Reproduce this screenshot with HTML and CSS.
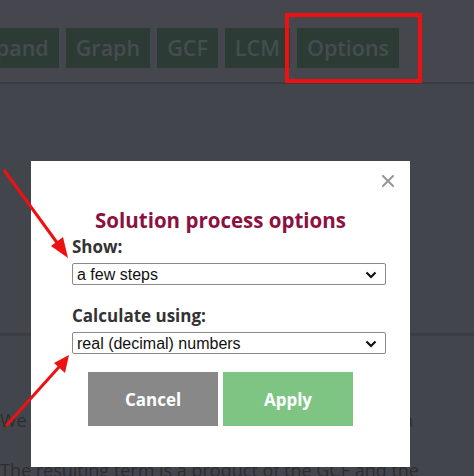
FILE: index.html
```html
<!DOCTYPE html>
<html lang="en">
<head>
<meta charset="utf-8">
<title>Solution process options</title>
<link rel="stylesheet" href="styles.css">
</head>
<body>
<header class="topbar">
  <nav class="tabs">
    <span class="tab">Expand</span>
    <span class="tab">Graph</span>
    <span class="tab">GCF</span>
    <span class="tab">LCM</span>
    <span class="tab">Options</span>
  </nav>
</header>
<main class="content">
  <section class="work"></section>
  <section class="explain">
    <p class="para first">We first factor out the common term in</p>
    <p class="para">The resulting term is a product of the GCF and the</p>
  </section>
</main>

<div class="modal">
  <svg class="close" width="14" height="14" viewBox="0 0 14 14">
    <path d="M2 2 L12 12 M12 2 L2 12" stroke="#9a9a9a" stroke-width="2.2" stroke-linecap="round"/>
  </svg>
  <div class="modal-body">
    <h2 class="title">Solution process options</h2>
    <label class="label">Show:</label>
    <div class="select-wrap">
      <select class="select"><option>a few steps</option></select>
      <svg class="chev" width="12" height="8" viewBox="0 0 12 8"><path d="M1.5 1.5 L6 6 L10.5 1.5" fill="none" stroke="#111" stroke-width="2.2"/></svg>
    </div>
    <label class="label second">Calculate using:</label>
    <div class="select-wrap">
      <select class="select"><option>real (decimal) numbers</option></select>
      <svg class="chev" width="12" height="8" viewBox="0 0 12 8"><path d="M1.5 1.5 L6 6 L10.5 1.5" fill="none" stroke="#111" stroke-width="2.2"/></svg>
    </div>
    <div class="buttons">
      <button class="btn cancel">Cancel</button>
      <button class="btn apply">Apply</button>
    </div>
  </div>
</div>

<svg class="annot" width="474" height="476" viewBox="0 0 474 476">
  <rect x="287" y="15" width="133" height="66" fill="none" stroke="#ee1111" stroke-width="4"/>
  <line x1="4" y1="170" x2="58" y2="244" stroke="#ee1111" stroke-width="3"/>
  <polygon points="68,258 51,246 63,237" fill="#ee1111"/>
  <line x1="6" y1="426" x2="59" y2="367" stroke="#ee1111" stroke-width="3"/>
  <polygon points="69,355 65,373 54,363" fill="#ee1111"/>
</svg>
</body>
</html>
```

FILE: styles.css
```css
html, body {
  margin: 0;
  padding: 0;
}
body {
  width: 474px;
  height: 476px;
  overflow: hidden;
  background: #43454c;
  font-family: "Open Sans", "DejaVu Sans", sans-serif;
}
.topbar {
  height: 84px;
  padding-top: 28px;
  box-sizing: border-box;
  background: #45464e;
  border-bottom: 2px solid #3a3b41;
}
.tabs {
  display: flex;
  gap: 7px;
  margin-left: -38px;
}
.tab {
  height: 40px;
  line-height: 40px;
  padding: 0 10px;
  background: #2c3c34;
  color: #464c4f;
  font-size: 21.5px;
  font-weight: 600;
  white-space: nowrap;
}
.content {
  display: flex;
  flex-direction: column;
}
.work {
  height: 249px;
  border-bottom: 3px solid #3b3d42;
}
.explain {
  padding-top: 71px;
}
.para {
  margin: 0 0 23px;
  width: 413px;
  font-size: 18px;
  line-height: 27px;
  color: #2c2d31;
  white-space: nowrap;
}
.para.first {
  text-align: justify;
  text-align-last: justify;
  white-space: normal;
}

.modal {
  position: fixed;
  left: 31px;
  top: 161px;
  width: 379px;
  height: 306px;
  background: #ffffff;
}
.close {
  position: absolute;
  right: 15px;
  top: 13px;
}
.modal-body {
  display: flex;
  flex-direction: column;
  padding: 44px 24px 0 41px;
}
.title {
  margin: 0 0 0 -17px;
  text-align: center;
  font-size: 20.5px;
  line-height: 30px;
  font-weight: 700;
  color: #8c1141;
}
.label {
  font-size: 17px;
  line-height: 24px;
  font-weight: 700;
  color: #333333;
  margin-bottom: 4px;
}
.label.second {
  margin-top: 19px;
}
.select-wrap {
  position: relative;
}
.select {
  appearance: none;
  -webkit-appearance: none;
  display: block;
  width: 314px;
  height: 22px;
  margin: 0;
  padding: 0 0 0 4px;
  border: 1px solid #8a8a8a;
  border-radius: 2px;
  background: #ffffff;
  font-family: "Liberation Sans", Arial, sans-serif;
  font-size: 16px;
  color: #111111;
}
.chev {
  position: absolute;
  right: 9px;
  top: 8px;
  pointer-events: none;
}
.buttons {
  display: flex;
  gap: 5px;
  justify-content: center;
  margin: 18px 0 0 -17px;
}
.btn {
  width: 130px;
  height: 54px;
  border: none;
  margin: 0;
  font-family: "Open Sans", "DejaVu Sans", sans-serif;
  font-size: 17px;
  font-weight: 700;
  color: #ffffff;
}
.cancel {
  background: #888888;
}
.apply {
  background: #7ec584;
}
.annot {
  position: fixed;
  left: 0;
  top: 0;
  pointer-events: none;
}
```
